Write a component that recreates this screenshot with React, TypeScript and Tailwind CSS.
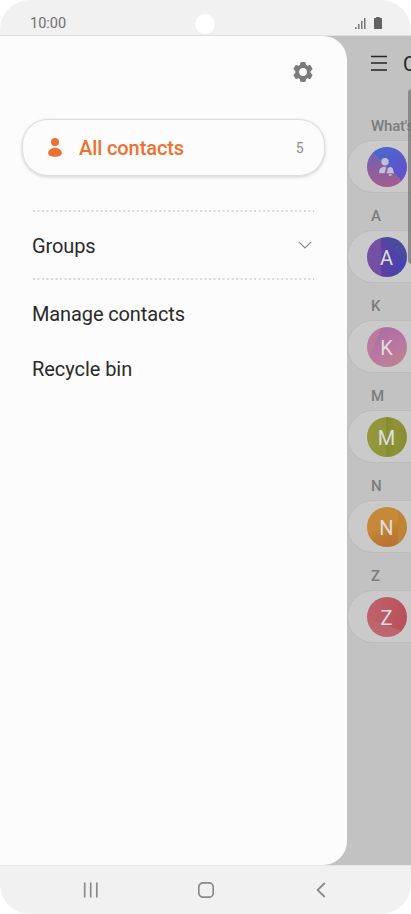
interface Contact {
  section: string;
  avatar: string;
}

const contacts: Contact[] = [
  {
    section: "A",
    avatar:
      "bg-[linear-gradient(45deg,transparent_68%,#4a4a9e_68%),linear-gradient(90deg,#7650a3_0%,#7150a3_36%,#5d41a0_36%,#4c43a8_75%,#4045bd_100%)]",
  },
  {
    section: "K",
    avatar:
      "bg-[linear-gradient(112deg,#ba7c9f_0%,#b87c9f_26%,transparent_26%),linear-gradient(155deg,#ae70a3_20%,#b976a0_55%,#bd8492_90%)]",
  },
  {
    section: "M",
    avatar:
      "bg-[linear-gradient(90deg,#94973a_0%,#92963a_48%,#868b30_48%,#8f9338_70%,#888c30_100%)]",
  },
  {
    section: "N",
    avatar:
      "bg-[linear-gradient(90deg,transparent_77%,#bd8436_77%),linear-gradient(160deg,#c48a36_10%,#c6893a_45%,#bd7a33_65%,#b77234_95%)]",
  },
  {
    section: "Z",
    avatar:
      "bg-[linear-gradient(20deg,#bd6870_0%,#bd646e_34%,transparent_34%),linear-gradient(100deg,#bd6470_0%,#bc5962_50%,#b84d5b_100%)]",
  },
];

function StatusBar() {
  return (
    <header className="relative flex h-9 shrink-0 items-end justify-between border-b border-[#dfdfdf] bg-[#f1f1f1] pr-[29px] pb-[2px] pl-[30px]">
      <span className="text-[14.5px] leading-[18px] text-[#707070]">10:00</span>
      <span className="absolute top-[14px] left-[195px] h-[20px] w-[20px] rounded-full bg-white" />
      <div className="flex items-end gap-2 pb-[4px]">
        <svg width="11" height="12" viewBox="0 0 11 12" fill="#777777">
          <rect x="0" y="10" width="1.5" height="2" />
          <rect x="3" y="7" width="1.5" height="5" />
          <rect x="6" y="4" width="1.5" height="8" />
          <rect x="9" y="1" width="1.5" height="11" />
        </svg>
        <svg width="8" height="12" viewBox="0 0 8 12" fill="#636363">
          <path d="M2.2 0H5.8V1H7.2Q8 1 8 1.8V11.2Q8 12 7.2 12H.8Q0 12 0 11.2V1.8Q0 1 .8 1H2.2Z" />
        </svg>
      </div>
    </header>
  );
}

function Divider() {
  return (
    <div className="ml-[32.5px] h-[2px] w-[281px] shrink-0 bg-[radial-gradient(circle_at_1px_1px,#d6d6d6_0.7px,transparent_1.3px)] bg-[length:4.53px_2px] bg-repeat-x" />
  );
}

function GearIcon() {
  return (
    <svg width="24" height="24" viewBox="0 0 24 24" fill="#7b7b7b">
      <circle cx="12" cy="12" r="7.7" />
      <rect x="9.1" y="2.1" width="5.8" height="19.8" rx="1.6" />
      <rect x="9.1" y="2.1" width="5.8" height="19.8" rx="1.6" transform="rotate(60 12 12)" />
      <rect x="9.1" y="2.1" width="5.8" height="19.8" rx="1.6" transform="rotate(120 12 12)" />
      <circle cx="12" cy="12" r="3.9" fill="#fcfcfc" />
    </svg>
  );
}

function Drawer() {
  return (
    <nav className="flex w-[347px] shrink-0 flex-col rounded-r-[24px] bg-[#fcfcfc]">
      <div className="flex h-[83px] shrink-0 items-start justify-end pt-[24px] pr-[32.5px]">
        <button>
          <GearIcon />
        </button>
      </div>

      <button className="mx-[22px] flex h-[57px] shrink-0 items-center rounded-[26px] border border-[#dedede] bg-[#fcfcfc] pr-[20.5px] pl-[25px] shadow-[0_1px_3px_0.5px_rgba(0,0,0,0.14)]">
        <svg width="14" height="19" viewBox="0 0 14 19" fill="#ec7031">
          <circle cx="7" cy="4" r="4" />
          <path d="M.2 15.3C.2 12.2 3 9.8 7 9.8s6.8 2.4 6.8 5.5c0 2.4-3 3.5-6.8 3.5S.2 17.7.2 15.3Z" />
        </svg>
        <span className="ml-[17px] text-[20px] leading-6 font-medium tracking-[-0.1px] text-[#ec7031]">
          All contacts
        </span>
        <span className="ml-auto pt-px text-[14px] text-[#8c8c8c]">5</span>
      </button>

      <div className="h-[34px] shrink-0" />
      <Divider />
      <button className="flex h-[66px] shrink-0 items-center justify-between pr-[35px] pl-[32px]">
        <span className="pt-px text-[20px] tracking-[-0.12px] text-[#2a2a2a]">Groups</span>
        <svg width="14" height="8" viewBox="0 0 14 8" fill="none" stroke="#8a8a8a" strokeWidth="1.2">
          <path d="M.8.8 7 7 13.2.8" />
        </svg>
      </button>
      <Divider />

      <div className="mt-[6px] flex flex-col">
        <button className="flex h-[55px] items-center pl-[32px] text-[20px] tracking-[-0.12px] text-[#2a2a2a]">
          Manage contacts
        </button>
        <button className="flex h-[55px] items-center pl-[32px] text-[20px] tracking-[-0.06px] text-[#2a2a2a]">
          Recycle bin
        </button>
      </div>
    </nav>
  );
}

function Section({ title, children }: { title: string; children: React.ReactNode }) {
  return (
    <section className="h-[90px] w-[320px] shrink-0">
      <h2 className="flex h-[29px] items-center pt-[2px] pl-[24px] text-[15px] font-medium tracking-[-0.2px] whitespace-nowrap text-[#7c7c7c]">
        {title}
      </h2>
      <div className="flex h-[53px] items-center rounded-[26px] border border-[#bbbbbb] bg-[#cacaca] pl-[18.5px]">
        {children}
      </div>
    </section>
  );
}

function ContactList() {
  return (
    <main className="relative flex min-w-0 flex-1 flex-col overflow-hidden">
      <div className="flex h-[75px] shrink-0 items-start gap-4 pt-[16px] pl-[24px]">
        <svg width="16" height="24" viewBox="0 0 16 24" stroke="#252525" strokeWidth="1.6" className="shrink-0">
          <path d="M0 4.5H16M0 11H16M0 18H16" />
        </svg>
        <h1 className="text-[20px] leading-[25px] text-[#252525]">Contacts</h1>
      </div>

      <Section title="What's new">
        <svg width="40" height="40" viewBox="0 0 40 40">
          <defs>
            <linearGradient id="blue" x1="0" y1="0" x2="0.6" y2="1">
              <stop offset="0" stopColor="#436cd0" />
              <stop offset="1" stopColor="#6450cb" />
            </linearGradient>
            <linearGradient id="pink" x1="0" y1="0" x2="0" y2="1">
              <stop offset="0.15" stopColor="#7263b5" />
              <stop offset="0.6" stopColor="#8b5f9f" />
              <stop offset="1" stopColor="#a55d8e" />
            </linearGradient>
          </defs>
          <circle cx="20" cy="20" r="20" fill="url(#pink)" />
          <path d="M6 5.7A20 20 0 0 1 34.7 33.5Z" fill="url(#blue)" />
          <g fill="#c4c0d4">
            <circle cx="18" cy="14.8" r="3.7" />
            <path d="M12.2 26.3V24.5C12.2 21.5 14.5 19.8 18.8 19.8 18.8 22 18.4 24 17.5 26.3Z" />
            <path d="M19.5 25.6C20.5 24.6 20.3 24 20.5 22.6 20.7 20.9 21.7 20 23.3 20S25.9 20.9 26.1 22.6C26.3 24 26.1 24.6 27.1 25.6V26.3H19.5Z" />
            <path d="M21.5 27.2H25.1A1.8 1.5 0 0 1 21.5 27.2Z" />
          </g>
        </svg>
      </Section>
      {contacts.map(({ section, avatar }) => (
        <Section key={section} title={section}>
          <span
            className={`flex h-10 w-10 items-center justify-center rounded-full pt-[2px] text-[20px] leading-none text-[#dedede] ${avatar}`}
          >
            {section}
          </span>
        </Section>
      ))}

      <span className="absolute top-[53px] left-[60.5px] h-[175px] w-[8px] rounded-[4px] bg-[#707070]/70" />
    </main>
  );
}

function NavigationBar() {
  return (
    <footer className="grid h-[49px] shrink-0 grid-cols-3 items-center border-t border-[#e6e6e6] bg-[#f1f1f1] px-[33px]">
      <svg className="mx-auto" width="16" height="16" viewBox="0 0 16 16" stroke="#8a8a8a" strokeWidth="1.7">
        <path d="M1.7.5V15.5M7.7.5V15.5M13.8.5V15.5" />
      </svg>
      <svg className="mx-auto" width="16" height="16" viewBox="0 0 16 16" fill="none" stroke="#8a8a8a" strokeWidth="1.7">
        <rect x=".8" y=".8" width="14.4" height="14.4" rx="4.2" />
      </svg>
      <svg className="mx-auto" width="10" height="16" viewBox="0 0 10 16" fill="none" stroke="#8a8a8a" strokeWidth="1.8">
        <path d="M8.8 1 1.6 8 8.8 15" />
      </svg>
    </footer>
  );
}

export default function App() {
  return (
    <div className="h-[914px] w-[411px] bg-white font-[Roboto,sans-serif]">
      <div className="flex h-full flex-col overflow-hidden rounded-[30px]">
        <StatusBar />
        <div className="flex min-h-0 flex-1 bg-[#c2c2c2]">
          <Drawer />
          <ContactList />
        </div>
        <NavigationBar />
      </div>
    </div>
  );
}
